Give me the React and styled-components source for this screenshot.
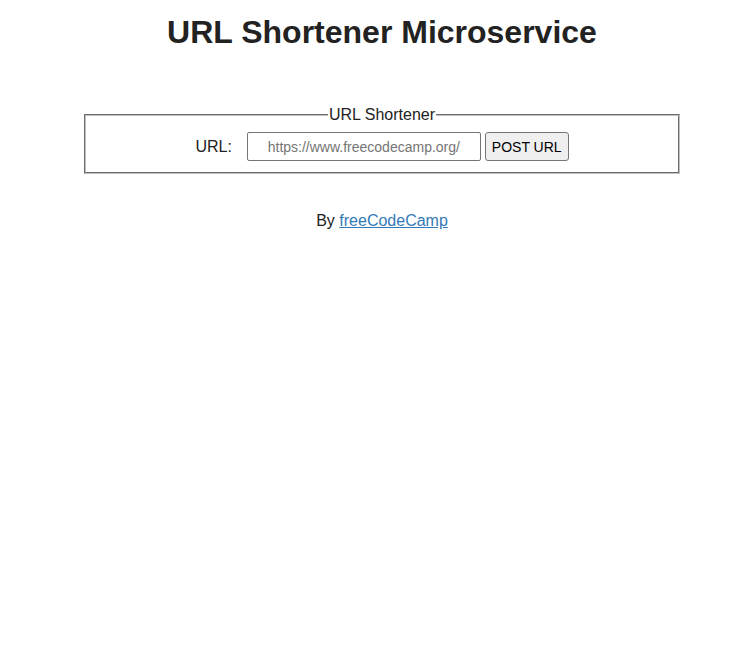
import React from 'react';
import styled, { createGlobalStyle } from 'styled-components';

const GlobalStyle = createGlobalStyle`
  html, body {
    overflow-x: hidden;
  }

  body {
    margin: 0;
    background-color: #fff;
    color: #222;
    font-family: "Liberation Sans", Arial, sans-serif;
  }
`;

const Page = styled.div`
  width: 764px;
  text-align: center;
`;

const Title = styled.h1`
  margin: 14px 0 0;
  font-size: 32px;
  font-weight: bold;
  line-height: 37px;
`;

const Container = styled.div`
  padding-top: 55px;
`;

const Fieldset = styled.fieldset`
  box-sizing: border-box;
  width: 596px;
  margin: 0 auto;
  padding: 8px 12px 11px;
  border: 2px groove rgb(192, 192, 192);
`;

const Legend = styled.legend`
  padding: 0 1px;
  font-size: 16px;
  line-height: 18px;
`;

const Form = styled.form`
  display: flex;
  justify-content: center;
  align-items: center;
`;

const Label = styled.label`
  font-size: 16px;
  margin-right: 15px;
`;

const Input = styled.input`
  box-sizing: border-box;
  width: 234px;
  height: 29px;
  padding: 1px 16px;
  border: 1px solid #767676;
  border-radius: 2px;
  font-family: inherit;
  font-size: 14px;
  text-align: center;
  color: #222;

  &::placeholder {
    color: #757575;
  }
`;

const Button = styled.button`
  box-sizing: border-box;
  height: 29px;
  margin-left: 4px;
  padding: 1px 6px;
  background-color: #efefef;
  border: 1px solid #767676;
  border-radius: 3px;
  font-family: inherit;
  font-size: 14px;
  color: #000;
`;

const Footer = styled.p`
  margin: 38px 0 0;
  font-size: 16px;
  line-height: 18px;

  a {
    color: #337ab7;
  }
`;

const App = () => (
  <Page>
    <GlobalStyle />
    <Title>URL Shortener Microservice</Title>
    <Container>
      <Fieldset>
        <Legend>URL Shortener</Legend>
        <Form onSubmit={e => e.preventDefault()}>
          <Label htmlFor="url_input">URL:</Label>
          <Input id="url_input" type="text" name="url" placeholder="https://www.freecodecamp.org/" />
          <Button type="submit">POST URL</Button>
        </Form>
      </Fieldset>
    </Container>
    <Footer>
      By <a href="#">freeCodeCamp</a>
    </Footer>
  </Page>
);

export default App;
